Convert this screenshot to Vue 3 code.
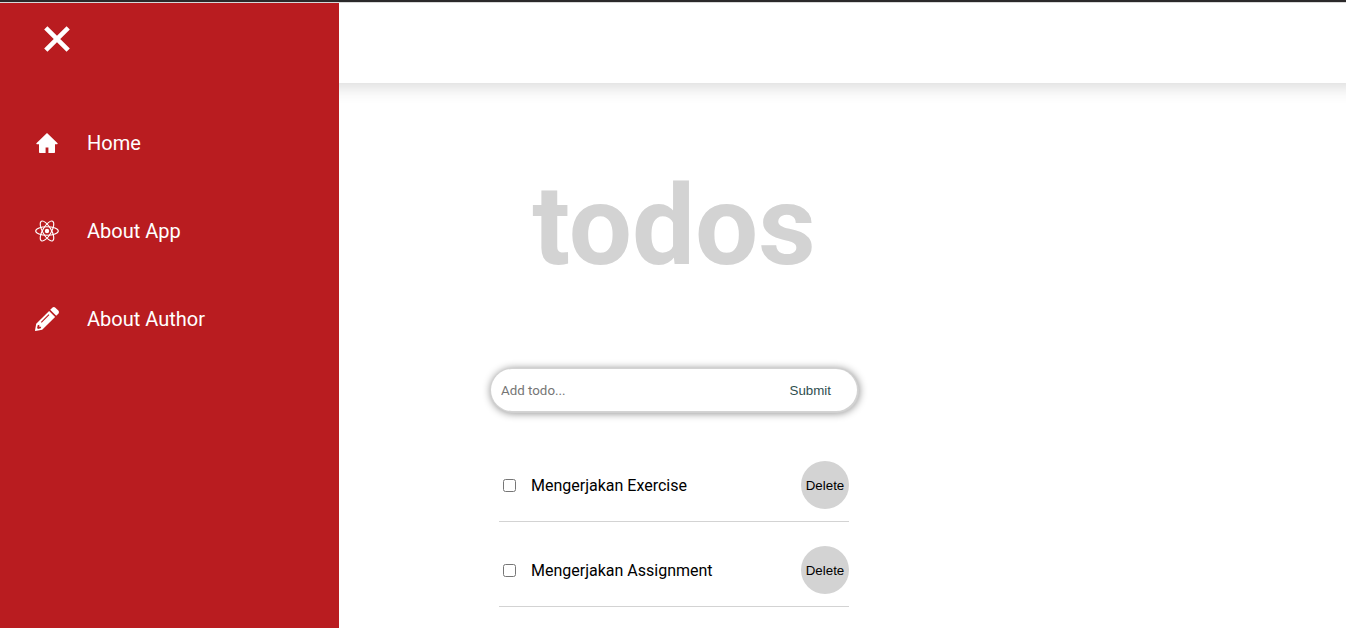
<script setup>
import { ref } from 'vue'

const draft = ref('')
const todos = ref([
  { id: 1, title: 'Mengerjakan Exercise', done: false },
  { id: 2, title: 'Mengerjakan Assignment', done: false },
])

function addTodo() {
  const title = draft.value.trim()
  if (!title) return
  todos.value.push({ id: Date.now(), title, done: false })
  draft.value = ''
}

function removeTodo(id) {
  todos.value = todos.value.filter((todo) => todo.id !== id)
}
</script>

<template>
  <div class="page">
    <header class="topbar"></header>

    <aside class="drawer">
      <button class="close" type="button" aria-label="Close menu">
        <svg viewBox="0 0 26 26" width="26" height="26" aria-hidden="true">
          <path d="M1.8 1.8L24.2 24.2M24.2 1.8L1.8 24.2" fill="none" stroke="#fff" stroke-width="4.6" />
        </svg>
      </button>
      <nav class="menu">
        <a class="link" href="#home">
          <svg class="icon" viewBox="0 0 24 24" aria-hidden="true">
            <path fill="#fff" d="M12 2L22.6 12.2Q23 13.2 22 13.2H20V21.2Q20 22 19.2 22H13.4V16.6H10.6V22H4.8Q4 22 4 21.2V13.2H2Q1 13.2 1.4 12.2Z" />
          </svg>
          <span>Home</span>
        </a>
        <a class="link" href="#app">
          <svg class="icon" viewBox="0 0 24 24" aria-hidden="true">
            <g fill="none" stroke="#fff" stroke-width="1.1">
              <ellipse cx="12" cy="12" rx="11.3" ry="4.3" />
              <ellipse cx="12" cy="12" rx="11.3" ry="4.3" transform="rotate(60 12 12)" />
              <ellipse cx="12" cy="12" rx="11.3" ry="4.3" transform="rotate(120 12 12)" />
            </g>
            <circle cx="12" cy="12" r="2.2" fill="#fff" />
          </svg>
          <span>About App</span>
        </a>
        <a class="link" href="#author">
          <svg class="icon" viewBox="0 0 24 24" aria-hidden="true">
            <path fill="#fff" fill-rule="evenodd" d="M14.1 3.9L20.1 9.9L7.2 22.8L0.4 24Q0 24 0 23.6L1.2 16.8ZM2.7 18.2L2.1 21L3 21.9L5.8 21.3L6.2 19.8H4.3V17.8ZM13.6 7.3L5.9 15L6.7 15.8L14.4 8.1Z" />
            <path fill="#fff" d="M15.2 2.8L17.3 0.7Q18.9 -0.6 20.4 0.7L23.3 3.6Q24.6 5.1 23.3 6.7L21.2 8.8Z" />
          </svg>
          <span>About Author</span>
        </a>
      </nav>
    </aside>

    <main class="content">
      <h1 class="title">todos</h1>
      <form class="entry" @submit.prevent="addTodo">
        <input v-model="draft" class="field" type="text" placeholder="Add todo..." aria-label="Add todo" />
        <button class="submit" type="submit">Submit</button>
      </form>
      <ul class="list">
        <li v-for="todo in todos" :key="todo.id" class="item">
          <input :id="`todo-${todo.id}`" v-model="todo.done" class="check" type="checkbox" />
          <label class="label" :for="`todo-${todo.id}`">{{ todo.title }}</label>
          <button class="delete" type="button" @click="removeTodo(todo.id)">Delete</button>
        </li>
      </ul>
    </main>
  </div>
</template>

<style>
body {
  margin: 0;
  background: #fff;
}
</style>

<style scoped>
.page {
  position: relative;
  box-sizing: border-box;
  min-height: 100vh;
  overflow: hidden;
  border-top: 2px solid #2b292a;
  font-family: Roboto, sans-serif;
  color: #000;
}

.topbar {
  box-sizing: border-box;
  height: 81px;
  margin-right: -16px;
  border-top: 1px solid #d8d8d8;
  box-shadow: 0 4px 16px rgba(0, 0, 0, 0.15);
}

.drawer {
  position: absolute;
  top: 1px;
  bottom: 0;
  left: 0;
  box-sizing: border-box;
  width: 339px;
  padding: 23px 35px 0;
  background: #b91c20;
}

.close {
  display: block;
  margin: 0 0 0 9px;
  padding: 0;
  border: 0;
  background: none;
  cursor: pointer;
}

.close svg {
  display: block;
}

.menu {
  display: flex;
  flex-direction: column;
  gap: 64px;
  margin-top: 79px;
}

.link {
  display: flex;
  align-items: center;
  gap: 28px;
  color: #fff;
  font-size: 20px;
  line-height: 24px;
  text-decoration: none;
}

.icon {
  flex: none;
  width: 24px;
  height: 24px;
}

.content {
  display: flex;
  flex-direction: column;
  align-items: center;
  padding-left: 2px;
}

.title {
  margin: 77px 0;
  color: #d3d3d3;
  font-size: 112px;
  font-weight: 700;
  line-height: 132px;
}

.entry {
  display: flex;
  align-items: center;
  box-sizing: border-box;
  width: 366px;
  height: 42px;
  padding: 0 26px 0 10px;
  border-radius: 21px;
  background: #fff;
  box-shadow: 0 0 0 1px #d3d3d3, 1px 1px 1px 1px #d3d3d3, 1px 1px 8px 1px #808080;
}

.field {
  flex: 1;
  min-width: 0;
  padding: 0;
  border: 0;
  outline: 0;
  background: none;
  font-family: Roboto, sans-serif;
}

.submit {
  padding: 0;
  border: 0;
  background: none;
  color: #2f4f4f;
  font-family: "Liberation Sans", Arial, sans-serif;
  cursor: pointer;
}

.list {
  width: 350px;
  margin: 26px 0 0;
  padding: 0;
  list-style: none;
}

.item {
  display: flex;
  align-items: center;
  padding: 24px 0 12px;
  border-bottom: 1px solid #d3d3d3;
}

.check {
  width: 13px;
  height: 13px;
  margin: 0 15px 0 4px;
}

.label {
  flex: 1;
  padding-top: 2px;
  font-size: 16px;
  line-height: 20px;
}

.delete {
  width: 48px;
  height: 48px;
  padding: 0;
  border: 0;
  border-radius: 50%;
  background: #d3d3d3;
  color: #000;
  font-family: "Liberation Sans", Arial, sans-serif;
  cursor: pointer;
}
</style>
